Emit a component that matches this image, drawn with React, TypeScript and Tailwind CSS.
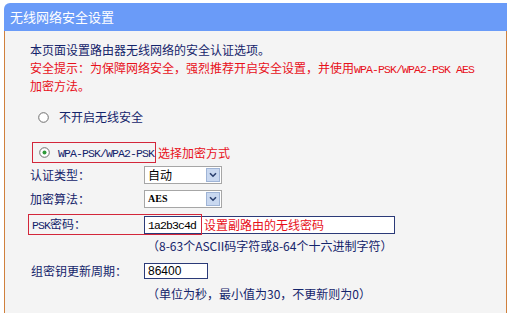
import React from "react";

const cjk = { fontFamily: '"Noto Sans CJK SC", "Noto Sans", sans-serif' };
const mono = { fontFamily: '"Liberation Mono", "DejaVu Sans Mono", monospace' };

function Mono({ children }: { children: React.ReactNode }) {
  return (
    <span style={mono} className="text-[11.5px] tracking-[-0.9px]">
      {children}
    </span>
  );
}

function Radio({ checked }: { checked?: boolean }) {
  return (
    <svg width="11" height="11" viewBox="0 0 11 11" className="shrink-0">
      <circle cx="5.5" cy="5.5" r="4.8" fill="#fff" stroke="#6d6d6d" strokeWidth="1" />
      {checked && <circle cx="5.5" cy="5.5" r="2" fill="#2f9a3a" />}
    </svg>
  );
}

function Select({ value, monoText }: { value: string; monoText?: boolean }) {
  return (
    <div className="flex h-[18px] w-[78px] items-center border border-[#a6a6a6] bg-white">
      <div className="flex-1 pl-[3px] text-[12px] leading-none text-black" style={monoText ? { fontFamily: '"Liberation Serif", serif', fontWeight: 700, fontSize: 10 } : cjk}>
        {value}
      </div>
      <div className="mr-[1px] flex h-[14px] w-[14px] items-center justify-center border border-[#9fb4d6] bg-[#c9d8f0]">
        <svg width="8" height="6" viewBox="0 0 8 6">
          <path d="M1 1.2 L4 4.2 L7 1.2" fill="none" stroke="#2a3f6e" strokeWidth="1.6" />
        </svg>
      </div>
    </div>
  );
}

export default function App() {
  return (
    <div className="h-[313px] w-[510px] overflow-hidden bg-white pt-[3px] pl-[4px]" style={cjk}>
      <div className="flex h-[310px] w-[503px] flex-col">
        <div className="flex h-[28px] shrink-0 items-center rounded-tl-[6px] bg-[#6a9bf8] pl-[6px] text-[13px] text-white">
          无线网络安全设置
        </div>
        <div className="flex flex-1 flex-col border-x border-[#d0803c] bg-[#f4f4f4] pl-[25px] text-[12px] text-[#14246b]">
          <div className="mt-[10px] h-[18px] leading-[18px]">本页面设置路由器无线网络的安全认证选项。</div>
          <div className="h-[18px] leading-[18px] text-[#e8101a]">
            安全提示：为保障网络安全，强烈推荐开启安全设置，并使用<Mono>WPA-PSK/WPA2-PSK AES</Mono>
          </div>
          <div className="h-[18px] leading-[18px] text-[#e8101a]">加密方法。</div>

          <div className="mt-[13px] flex h-[18px] items-center">
            <div className="ml-[8px]"><Radio /></div>
            <span className="ml-[10px] text-[#14246b]">不开启无线安全</span>
          </div>

          <div className="mt-[16px] flex h-[21px] items-center">
            <div className="ml-[2px] flex h-[21px] w-[124px] items-center border border-[#d3263a]">
              <div className="ml-[6px]"><Radio checked /></div>
              <span className="ml-[8px] text-[#14246b]"><Mono>WPA-PSK/WPA2-PSK</Mono></span>
            </div>
            <span className="ml-[2px] text-[#e8101a]">选择加密方式</span>
          </div>

          <div className="mt-[3px] flex h-[18px] items-center">
            <span className="w-[114px]">认证类型：</span>
            <Select value="自动" />
          </div>
          <div className="mt-[6px] flex h-[18px] items-center">
            <span className="w-[114px]">加密算法：</span>
            <Select value="AES" monoText />
          </div>

          <div className="relative mt-[6px] flex h-[21px] items-center">
            <span className="w-[114px] pl-[2px]"><Mono>PSK</Mono>密码：</span>
            <div className="flex h-[18px] w-[251px] items-center border border-[#2b3a78] bg-white">
              <span className="pl-[3px] text-black"><Mono>1a2b3c4d</Mono></span>
              <span className="ml-[8px] text-[#e8101a]">设置副路由的无线密码</span>
            </div>
            <div className="pointer-events-none absolute left-[-2px] top-0 h-[21px] w-[174px] border border-[#d3263a]" />
          </div>

          <div className="mt-[2px] h-[18px] pl-[117px] leading-[18px]">（8-63个ASCII码字符或8-64个十六进制字符）</div>

          <div className="mt-[8px] flex h-[16px] items-center">
            <span className="w-[114px] pl-[1px]">组密钥更新周期：</span>
            <div className="flex h-[16px] w-[64px] items-center border border-[#2b3a78] bg-white pl-[3px] text-[12px] text-black" style={{ fontFamily: '"Liberation Sans", sans-serif' }}>
              86400
            </div>
          </div>

          <div className="mt-[6px] h-[18px] pl-[117px] leading-[18px]">（单位为秒，最小值为30，不更新则为0）</div>
        </div>
      </div>
    </div>
  );
}
